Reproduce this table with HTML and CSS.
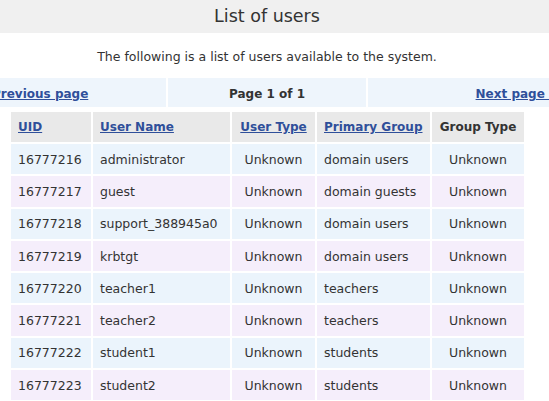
FILE: index.html
```html
<!DOCTYPE html>
<html>
<head>
<meta charset="utf-8">
<link rel="stylesheet" href="styles.css">
</head>
<body>
<div class="page">
  <div class="title-bar"><h1 class="title">List of users</h1></div>
  <p class="intro">The following is a list of users available to the system.</p>
  <div class="pager">
    <div class="pager-cell pager-prev"><a href="#">Previous page</a></div>
    <div class="pager-cell pager-mid">Page 1 of 1</div>
    <div class="pager-cell pager-next"><a href="#">Next page&nbsp;</a></div>
  </div>
  <table class="users">
    <thead>
      <tr>
        <th class="left col-uid"><a href="#">UID</a></th>
        <th class="left col-name"><a href="#">User Name</a></th>
        <th class="col-type"><a href="#">User Type</a></th>
        <th class="left col-group"><a href="#">Primary Group</a></th>
        <th class="col-gtype">Group Type</th>
      </tr>
    </thead>
    <tbody>
      <tr class="odd"><td>16777216</td><td>administrator</td><td class="c">Unknown</td><td>domain users</td><td class="c">Unknown</td></tr>
      <tr class="even"><td>16777217</td><td>guest</td><td class="c">Unknown</td><td>domain guests</td><td class="c">Unknown</td></tr>
      <tr class="odd"><td>16777218</td><td>support_388945a0</td><td class="c">Unknown</td><td>domain users</td><td class="c">Unknown</td></tr>
      <tr class="even"><td>16777219</td><td>krbtgt</td><td class="c">Unknown</td><td>domain users</td><td class="c">Unknown</td></tr>
      <tr class="odd"><td>16777220</td><td>teacher1</td><td class="c">Unknown</td><td>teachers</td><td class="c">Unknown</td></tr>
      <tr class="even"><td>16777221</td><td>teacher2</td><td class="c">Unknown</td><td>teachers</td><td class="c">Unknown</td></tr>
      <tr class="odd"><td>16777222</td><td>student1</td><td class="c">Unknown</td><td>students</td><td class="c">Unknown</td></tr>
      <tr class="even"><td>16777223</td><td>student2</td><td class="c">Unknown</td><td>students</td><td class="c">Unknown</td></tr>
    </tbody>
  </table>
</div>
</body>
</html>
```
FILE: styles.css
```css
html, body {
  margin: 0;
  padding: 0;
  background: #ffffff;
  overflow: hidden;
}
body {
  font-family: "DejaVu Sans", Verdana, sans-serif;
  font-size: 12.5px;
  color: #333333;
}
.page {
  width: 534px;
}
.title-bar {
  background: #f0f0f0;
  height: 33px;
  margin-right: -15px;
  padding-right: 15px;
  display: flex;
  align-items: center;
  justify-content: center;
}
.title {
  margin: 0 0 1px 0;
  font-size: 17.5px;
  font-weight: normal;
  color: #333333;
}
.intro {
  margin: 0;
  height: 45px;
  line-height: 47px;
  text-align: center;
}
.pager {
  display: flex;
  gap: 2px;
  margin-left: -15px;
  margin-right: -30px;
  height: 29px;
}
.pager-cell {
  background: #eef5fc;
  display: flex;
  align-items: center;
  padding-top: 2px;
  box-sizing: border-box;
  font-weight: bold;
  font-size: 12px;
}
.pager-prev {
  width: 181px;
  padding-left: 7px;
}
.pager-mid {
  width: 198px;
  justify-content: center;
}
.pager-next {
  flex: 1;
  justify-content: flex-end;
  padding-right: 15px;
}
a {
  color: #2f4f9a;
  text-decoration: underline;
}
.users {
  border-collapse: separate;
  border-spacing: 2px;
  margin: 3px 0 0 9px;
  width: 517px;
  table-layout: fixed;
}
.col-uid { width: 80px; }
.col-name { width: 137px; }
.col-type { width: 83px; }
.col-group { width: 113px; }
.col-gtype { width: 92px; }
.users th {
  background: #e9e9e9;
  height: 30px;
  padding: 0 7px;
  font-weight: bold;
  font-size: 12px;
  text-align: center;
  white-space: nowrap;
  color: #333333;
  box-sizing: border-box;
}
.users th.left {
  text-align: left;
}
.users td {
  height: 30.3px;
  padding: 0 7px;
  white-space: nowrap;
}
.users td.c {
  text-align: center;
}
.users tr.odd td {
  background: #ebf4fc;
}
.users tr.even td {
  background: #f5eefb;
}
```
